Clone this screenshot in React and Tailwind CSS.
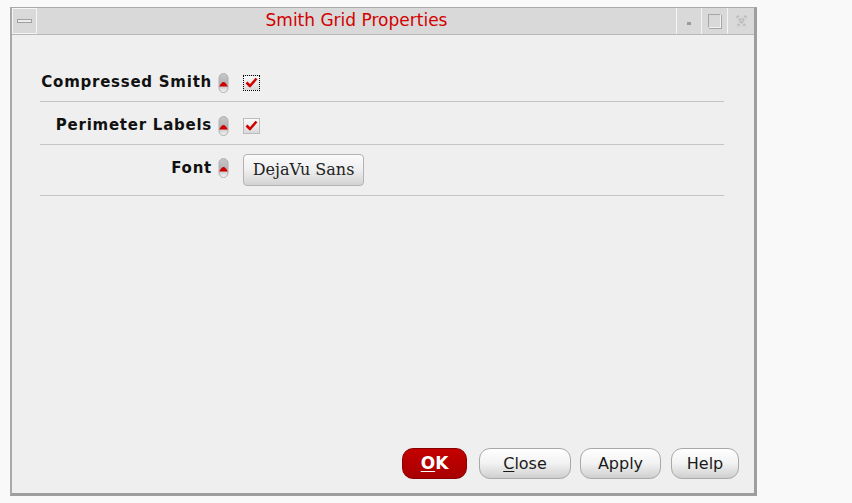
import { useState } from 'react';

// little grey pill with the red "inherited" marker
const Marker = () => (
  <svg width="11" height="20" viewBox="0 0 11 20" className="shrink-0">
    <defs>
      <linearGradient id="pill" x1="0" y1="0" x2="0" y2="1">
        <stop offset="0" stopColor="#c8c8c8" />
        <stop offset="0.5" stopColor="#b4b4b4" />
        <stop offset="1" stopColor="#f6f6f6" />
      </linearGradient>
    </defs>
    <rect x="1" y="0.5" width="9" height="19" rx="4.5" fill="url(#pill)" stroke="#b0b0b0" />
    <path d="M1.2 13.5 Q5.5 4.5 9.8 13.5 Z" fill="#cc0000" />
  </svg>
);

const Check = ({ focused }) => (
  <div
    className={`w-[17px] h-[16px] flex items-center justify-center bg-gradient-to-b from-[#fafafa] to-[#d9d9d9] ${
      focused ? 'border border-dotted border-black' : 'border border-[#bcbcbc]'
    }`}
  >
    <svg width="13" height="11" viewBox="0 0 13 11">
      <path d="M1.5 5.5 L5 9 L11.5 1.5" fill="none" stroke="#d00000" strokeWidth="2.6" strokeLinejoin="round" />
    </svg>
  </div>
);

const Row = ({ label, children, className = '' }) => (
  <div className={`flex items-center border-b border-[#c4c4c4] ${className}`}>
    <div className="w-[172px] text-right font-bold text-[15px] tracking-[0.75px] text-[#111]">{label}</div>
    <div className="ml-[6px]">
      <Marker />
    </div>
    <div className="ml-[14px] flex items-center">{children}</div>
  </div>
);

const DlgButton = ({ children, primary, w }) => (
  <button
    className={`${w} h-[31px] rounded-[11px] text-[16px] border ${
      primary
        ? 'bg-gradient-to-b from-[#c40000] to-[#a80000] border-[#8a0000] text-white font-bold text-[17px]'
        : 'bg-gradient-to-b from-[#ffffff] via-[#f2f2f2] to-[#cfcfcf] border-[#a9a9a9] text-[#1a1a1a]'
    }`}
  >
    {children}
  </button>
);

export default function App() {
  const [compressed] = useState(true);

  return (
    <div className="w-[852px] h-[503px] bg-[#f9f9f9] pt-[7px] pl-[10px] font-['DejaVu_Sans',sans-serif]">
      <div className="w-[747px] h-[489px] flex flex-col bg-[#efefef] border-l-2 border-t border-[#a9a9a9] border-r-[3px] border-b-[3px] border-r-[#9e9e9e] border-b-[#9e9e9e]">
        {/* Title bar */}
        <div className="h-[27px] flex bg-[#d9d9d9] border-b border-[#b8b8b8] shrink-0">
          <div className="w-[25px] flex items-center justify-center border-r border-[#f4f4f4] border-b border-[#a8a8a8] shadow-[inset_1px_1px_0_#f6f6f6]">
            <div className="w-[15px] h-[4px] bg-[#ececec] border border-[#a0a0a0]" />
          </div>
          <div className="flex-1 flex items-center justify-center text-[17px] text-[#d20000] border-r border-[#f4f4f4]">
            Smith Grid Properties
          </div>
          <div className="w-[25px] flex items-center justify-center border-r border-[#f4f4f4]">
            <div className="w-[4px] h-[3px] bg-[#9a9a9a] mt-[4px]" />
          </div>
          <div className="w-[26px] flex items-center justify-center border-r border-[#f4f4f4]">
            <div className="w-[13px] h-[14px] border border-[#a6a6a6] border-r-[#f2f2f2] border-b-[#f2f2f2] shadow-[1px_1px_0_#a6a6a6]" />
          </div>
          <div className="w-[26px] flex items-center justify-center">
            <svg width="13" height="15" viewBox="0 0 13 15">
              <path d="M2 2 L11 13 M11 2 L2 13" stroke="#bdbdbd" strokeWidth="3" strokeDasharray="2 1.5" />
            </svg>
          </div>
        </div>

        {/* Form */}
        <div className="flex-1 flex flex-col pl-[28px] pr-[30px] pt-[37px]">
          <Row label="Compressed Smith" className="h-[30px] pb-[8px]">
            <Check focused={compressed} />
          </Row>
          <Row label="Perimeter Labels" className="h-[43px] pt-[5px]">
            <Check />
          </Row>
          <div className="flex items-start border-b border-[#c4c4c4] h-[51px] pt-[9px]">
            <div className="w-[172px] text-right font-bold text-[15px] tracking-[0.75px] text-[#111] mt-[3px]">Font</div>
            <div className="ml-[6px] mt-[4px]">
              <Marker />
            </div>
            <button className="ml-[14px] w-[121px] h-[32px] rounded-[4px] border border-[#b3b3b3] bg-gradient-to-b from-[#fbfbfb] via-[#efefef] to-[#d3d3d3] text-[16px] text-[#222] font-['DejaVu_Serif',serif]">
              DejaVu Sans
            </button>
          </div>

          <div className="flex-1" />

          {/* Buttons */}
          <div className="flex justify-end items-center pb-[14px] -mr-[15px]">
            <DlgButton primary w="w-[65px]">
              <span className="underline underline-offset-2">O</span>K
            </DlgButton>
            <div className="ml-[12px]">
              <DlgButton w="w-[92px]">
                <span className="underline underline-offset-2">C</span>lose
              </DlgButton>
            </div>
            <div className="ml-[9px]">
              <DlgButton w="w-[81px]">Apply</DlgButton>
            </div>
            <div className="ml-[10px]">
              <DlgButton w="w-[68px]">Help</DlgButton>
            </div>
          </div>
        </div>
      </div>
    </div>
  );
}
